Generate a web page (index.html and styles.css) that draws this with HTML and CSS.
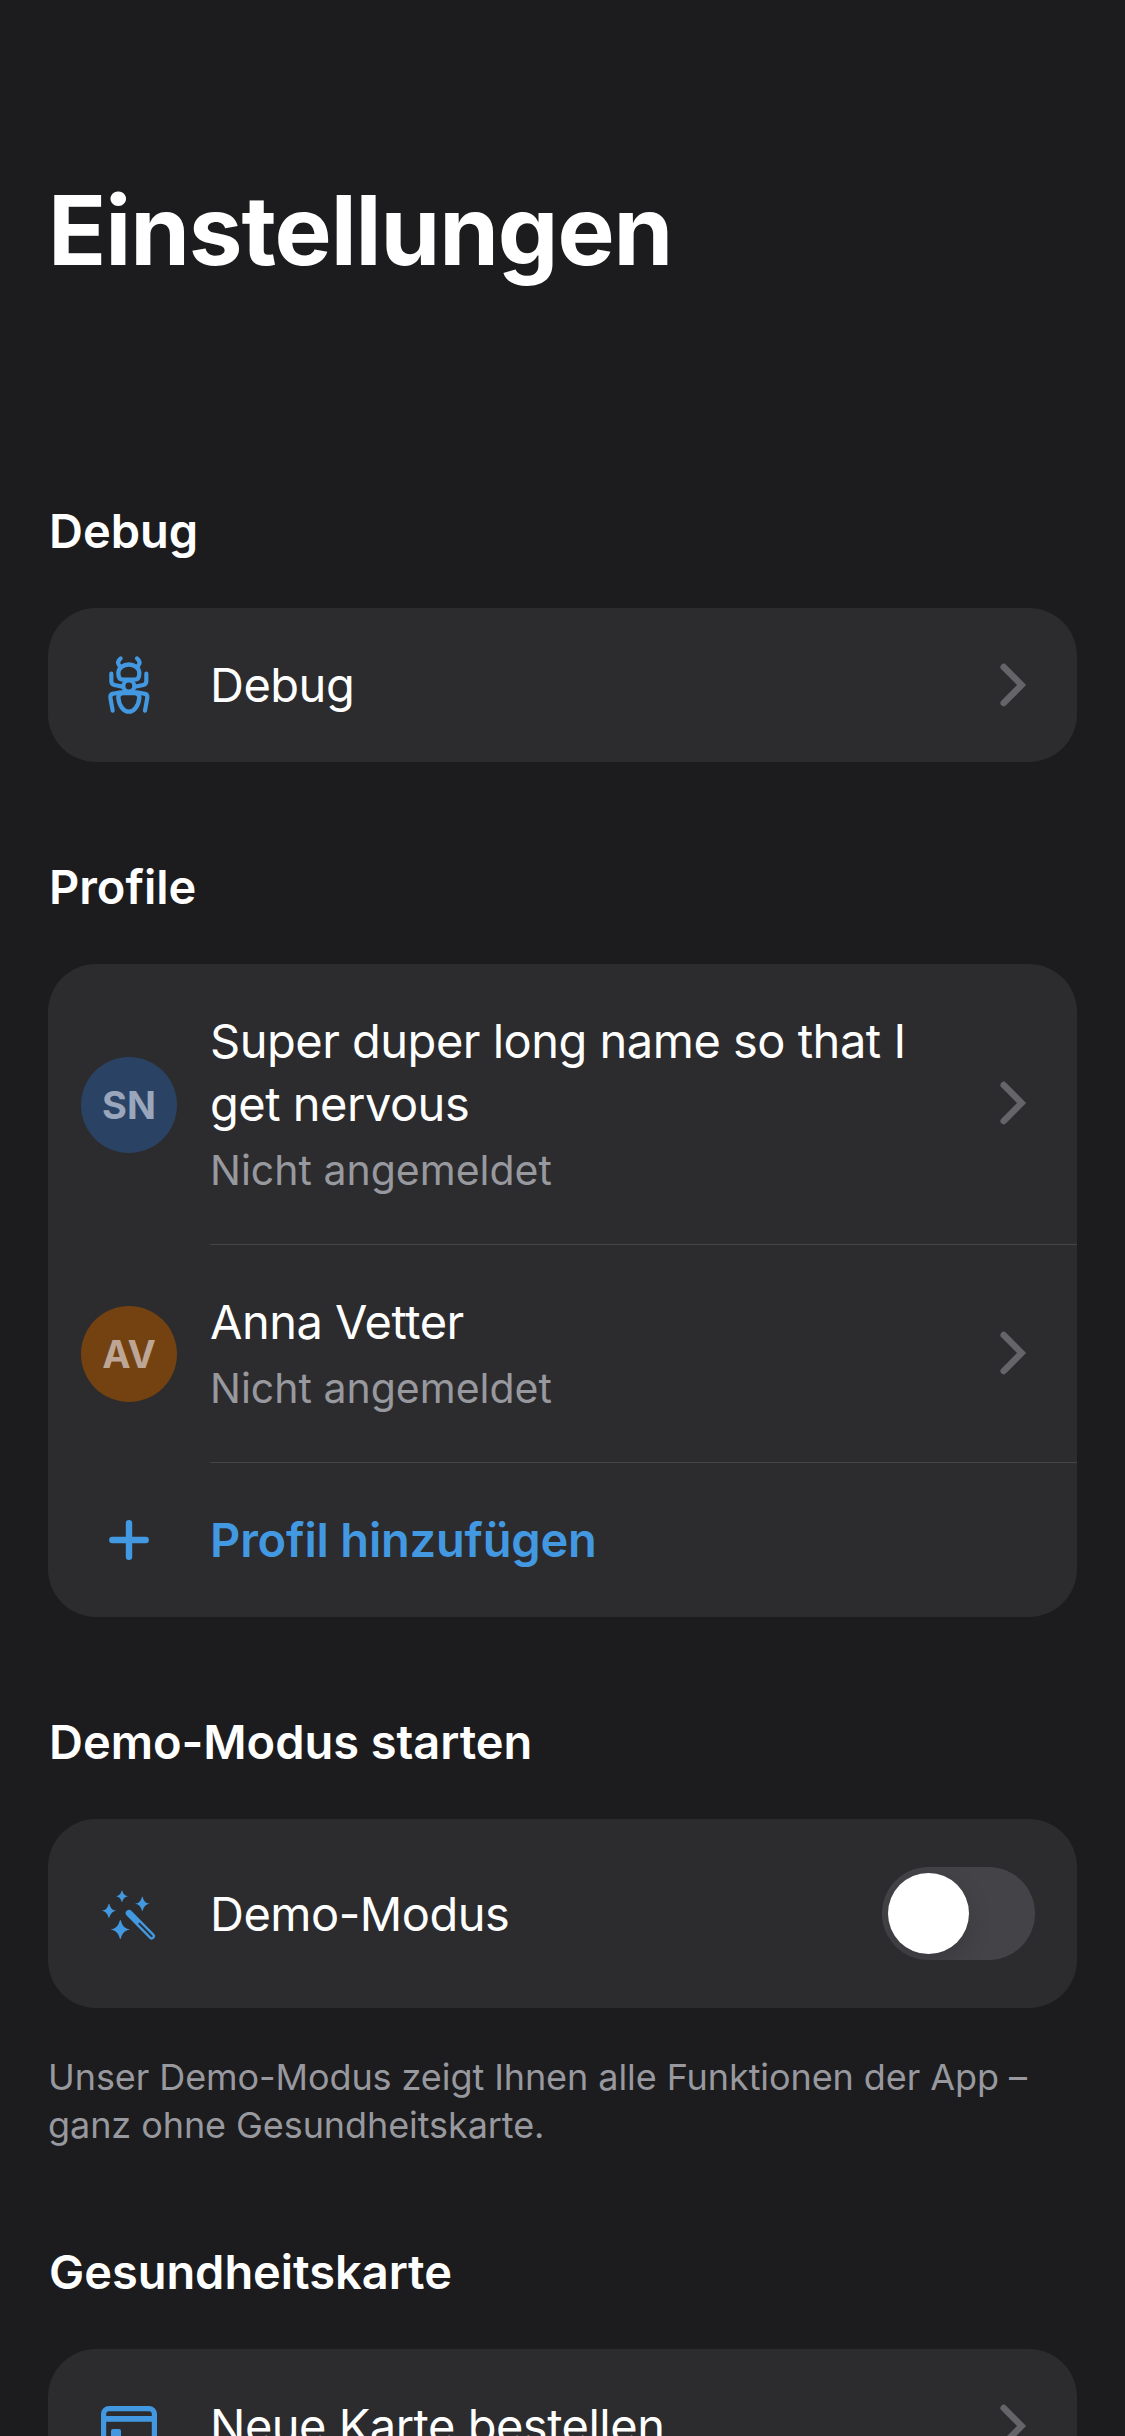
FILE: index.html
```html
<!DOCTYPE html>
<html lang="de">
<head>
<meta charset="utf-8">
<title>Einstellungen</title>
<link rel="stylesheet" href="styles.css">
</head>
<body>
<svg class="sprite" aria-hidden="true">
  <symbol id="chevron" viewBox="0 0 28 46"><path d="M4.700 5 L22.500 23 L4.700 41" fill="none" stroke="#656569" stroke-width="6.500" stroke-linecap="round"/></symbol>
  <symbol id="sparkle" viewBox="-1 -1 2 2"><path d="M0 -1 C.1 -1 .1 -.1 1 0 C.1 .1 .1 1 0 1 C-.1 1 -.1 .1 -1 0 C-.1 -.1 -.1 -1 0 -1Z" fill="#4299e1"/></symbol>
</svg>
<main class="screen">
  <h1 class="title">Einstellungen</h1>

  <section class="section">
    <h2 class="heading">Debug</h2>
    <div class="card">
      <div class="row">
        <div class="lead">
          <svg class="icon-bug" viewBox="-3 0 240 270" fill="none" stroke="#4299e1" stroke-width="12.500" stroke-linecap="round" stroke-linejoin="round">
            <path d="M92 55 Q79 66 88 77 M141 55 Q154 66 145 77"/>
            <path d="M85 99 C87 65 146 65 148 99 Q148 119 134 119 H99 Q85 119 85 99Z" stroke-width="13"/>
            <circle cx="116.500" cy="138" r="16.500"/>
            <path d="M64 101 V124 Q64 133 73 135 L98 140 M169 101 V124 Q169 133 160 135 L135 140"/>
            <path d="M68 212 L61 173 Q60 163 70 161 Q88 156 104 156 M165 212 L172 173 Q173 163 163 161 Q145 156 129 156"/>
            <path d="M100 159 H133 Q148 159 148 173 C146 200 130 215 116.500 215 C103 215 87 200 85 173 Q85 159 100 159Z" stroke-width="13"/>
          </svg>
        </div>
        <div class="body">
          <div class="text"><div class="label">Debug</div></div>
          <svg class="chevron"><use href="#chevron"/></svg>
        </div>
      </div>
    </div>
  </section>

  <section class="section">
    <h2 class="heading">Profile</h2>
    <div class="card">
      <div class="row divided">
        <div class="lead"><div class="avatar avatar-blue">SN</div></div>
        <div class="body">
          <div class="text"><div class="label">Super duper long name so that I get nervous</div><div class="status">Nicht angemeldet</div></div>
          <svg class="chevron"><use href="#chevron"/></svg>
        </div>
      </div>
      <div class="row divided">
        <div class="lead"><div class="avatar avatar-brown">AV</div></div>
        <div class="body">
          <div class="text"><div class="label">Anna Vetter</div><div class="status">Nicht angemeldet</div></div>
          <svg class="chevron"><use href="#chevron"/></svg>
        </div>
      </div>
      <div class="row">
        <div class="lead">
          <svg class="icon-plus" viewBox="0 0 40 40"><path d="M20 3.300 V36.700 M3.300 20 H36.700" stroke="#4299e1" stroke-width="6.400" stroke-linecap="round"/></svg>
        </div>
        <div class="body"><div class="text"><div class="label action">Profil hinzufügen</div></div></div>
      </div>
    </div>
  </section>

  <section class="section">
    <h2 class="heading">Demo-Modus starten</h2>
    <div class="card">
      <div class="row row-tall">
        <div class="lead">
          <svg class="icon-wand" viewBox="-3 -4.500 240 240">
            <use href="#sparkle" x="78" y="44" width="36" height="36"/>
            <use href="#sparkle" x="35" y="84" width="44" height="44"/>
            <use href="#sparkle" x="135" y="63" width="44" height="44"/>
            <use href="#sparkle" x="62" y="133" width="58" height="58"/>
            <path d="M117 113 L185 182" stroke="#4299e1" stroke-width="20" stroke-linecap="round"/>
            <path d="M148 144.500 L185 182" stroke="#2c2c2e" stroke-width="6" stroke-linecap="round"/>
          </svg>
        </div>
        <div class="body">
          <div class="text"><div class="label">Demo-Modus</div></div>
          <div class="switch"><div class="knob"></div></div>
        </div>
      </div>
    </div>
    <p class="note">Unser Demo-Modus zeigt Ihnen alle Funktionen der App – ganz ohne Gesundheitskarte.</p>
  </section>

  <section class="section">
    <h2 class="heading">Gesundheitskarte</h2>
    <div class="card">
      <div class="row">
        <div class="lead">
          <svg class="icon-card" viewBox="0 0 56 40" fill="none" stroke="#4299e1">
            <rect x="2.600" y="2.600" width="50.800" height="34.800" rx="5.500" stroke-width="5.200"/>
            <path d="M4 12.800 H52" stroke-width="5.700"/>
            <rect x="10" y="23" width="10" height="9" rx="2" fill="#4299e1" stroke="none"/>
          </svg>
        </div>
        <div class="body">
          <div class="text"><div class="label">Neue Karte bestellen</div></div>
          <svg class="chevron"><use href="#chevron"/></svg>
        </div>
      </div>
    </div>
  </section>
</main>
</body>
</html>
```

FILE: styles.css
```css
* { box-sizing: border-box; margin: 0; }

body {
  background: #1c1c1e;
  color: #fff;
  font-family: Inter, "Liberation Sans", sans-serif;
}

.sprite { display: none; }

.screen {
  width: 1125px;
  height: 2436px;
  padding: 170px 48px 0;
  overflow: hidden;
}

.title {
  margin-bottom: 212px;
  font-size: 96px;
  line-height: 120px;
  font-weight: 700;
  letter-spacing: -1.1px;
}

.section { margin-bottom: 96px; }

.heading {
  margin-bottom: 48px;
  padding-left: 1px;
  font-size: 47px;
  line-height: 58px;
  font-weight: 600;
  letter-spacing: -0.05px;
}

.card {
  background: #2c2c2e;
  border-radius: 48px;
  overflow: hidden;
}

.row { display: flex; min-height: 154px; }
.row-tall { min-height: 189px; }

.lead {
  width: 162px;
  display: flex;
  align-items: center;
  justify-content: center;
  flex: none;
}

.body {
  flex: 1;
  display: flex;
  align-items: center;
  gap: 24px;
  padding: 45px 50px 46px 0;
}

.divided .body {
  padding-bottom: 47px;
  border-bottom: 1px solid #454547;
}

.row-tall .body { padding: 0 42px 0 0; }

.text { flex: 1; }

.label {
  font-size: 47px;
  line-height: 63px;
  letter-spacing: -0.5px;
}

.action {
  color: #4299e1;
  font-weight: 600;
  letter-spacing: -0.18px;
}

.status {
  margin-top: 8px;
  color: #98989f;
  font-size: 41px;
  line-height: 54px;
}

.avatar {
  width: 96px;
  height: 96px;
  border-radius: 50%;
  font-size: 38px;
  font-weight: 700;
  line-height: 96px;
  text-align: center;
}

.avatar-blue { background: #2a4365; color: #9aa6bb; }
.avatar-brown { background: #744210; color: #bda696; }

.chevron { width: 28px; height: 46px; flex: none; }
.icon-bug { width: 80px; height: 90px; }
.icon-plus { width: 40px; height: 40px; }
.icon-wand { width: 80px; height: 80px; }
.icon-card { width: 56px; height: 40px; }

.lead svg { flex: none; }

.switch {
  width: 153px;
  height: 93px;
  padding: 6px;
  border-radius: 47px;
  background: #444348;
  flex: none;
  overflow: hidden;
}

.knob {
  width: 81px;
  height: 81px;
  border-radius: 50%;
  background: #fff;
  box-shadow: 0 9px 24px rgba(0, 0, 0, 0.15);
}

.note {
  margin: 45px 0 -2px;
  color: #98989f;
  font-size: 36px;
  line-height: 48px;
  letter-spacing: -0.08px;
}
```
